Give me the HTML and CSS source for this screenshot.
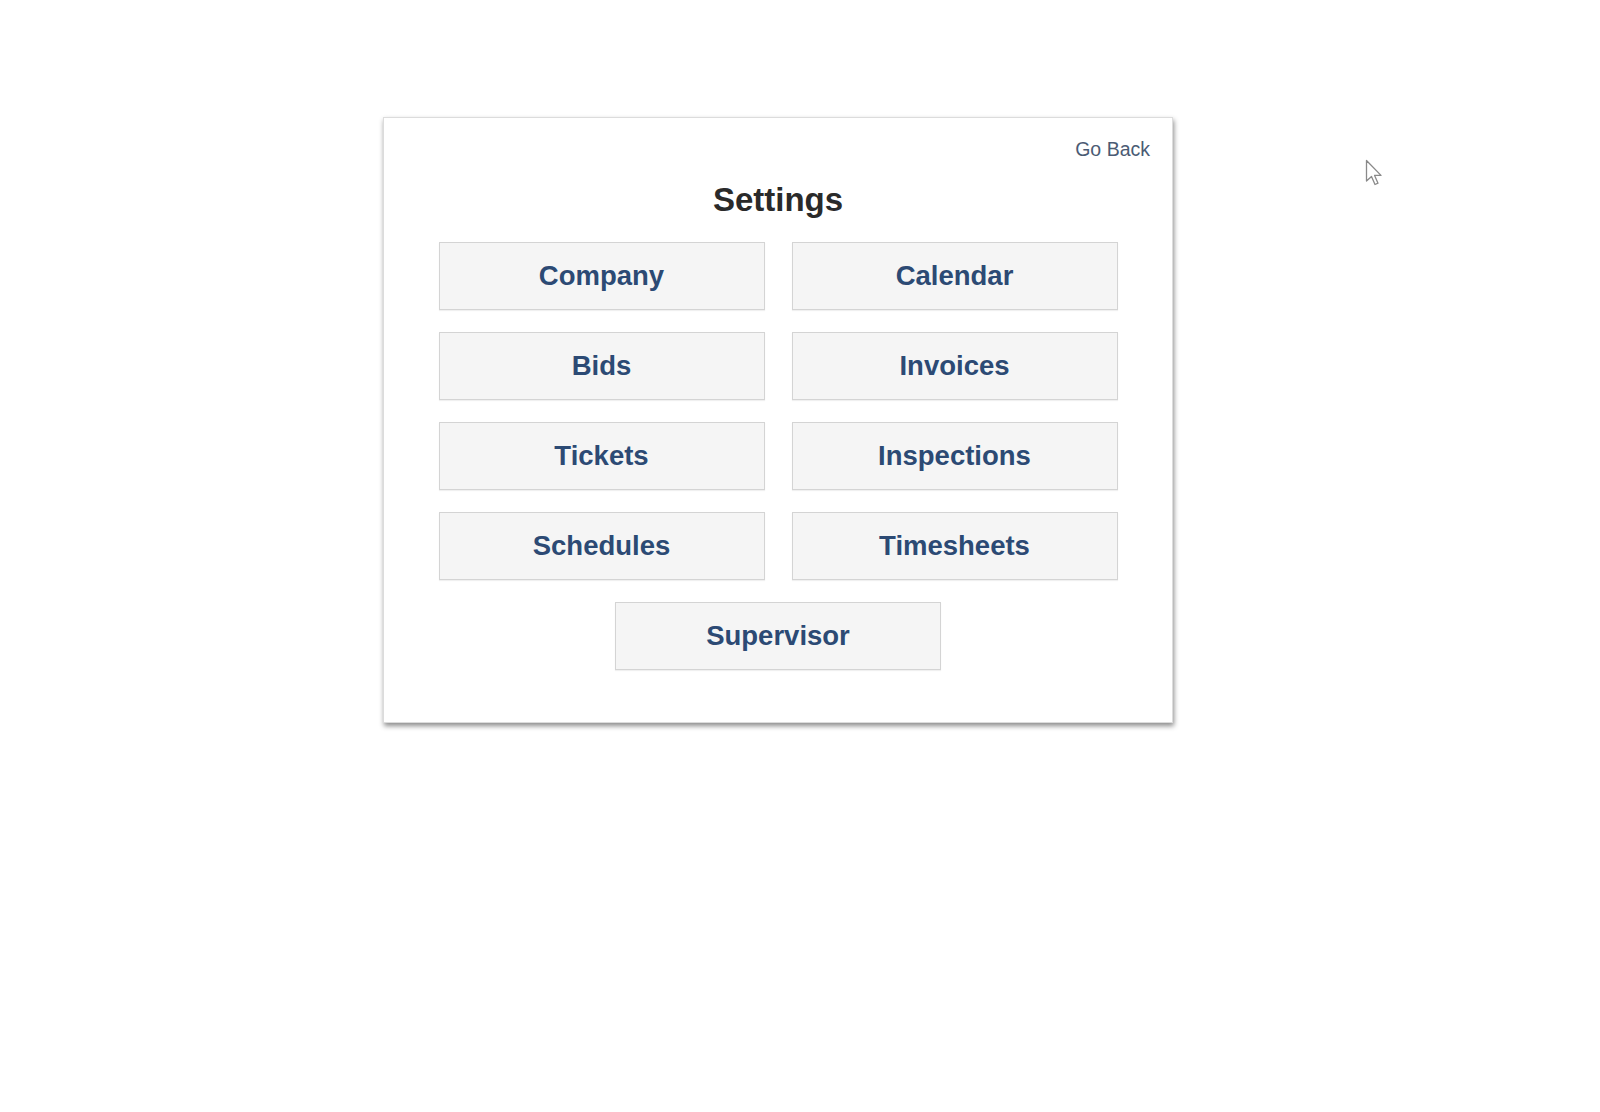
FILE: index.html
```html
<!DOCTYPE html>
<html>
<head>
<meta charset="utf-8">
<link rel="stylesheet" href="styles.css">
</head>
<body>
<div class="page">
  <div class="card">
    <div class="card-top"><a class="go-back">Go Back</a></div>
    <h1 class="title">Settings</h1>
    <div class="grid">
      <div class="btn">Company</div>
      <div class="btn">Calendar</div>
      <div class="btn">Bids</div>
      <div class="btn">Invoices</div>
      <div class="btn">Tickets</div>
      <div class="btn">Inspections</div>
      <div class="btn">Schedules</div>
      <div class="btn">Timesheets</div>
      <div class="btn btn-wide">Supervisor</div>
    </div>
  </div>
  <svg class="cursor" width="20" height="30" viewBox="0 0 20 30">
    <path d="M1.5 1.5 L1.5 22 L6.5 17.5 L10 25.5 L13 24.2 L9.6 16.4 L16 16.4 Z" fill="#fff" stroke="#8a8a8a" stroke-width="1.3" stroke-linejoin="round"/>
  </svg>
</div>
</body>
</html>
```
FILE: styles.css
```css
html, body {
  margin: 0;
  padding: 0;
  background: #ffffff;
  font-family: "Liberation Sans", Arial, Helvetica, sans-serif;
}
.page {
  position: relative;
  width: 1600px;
  height: 1112px;
  padding-top: 117px;
  box-sizing: border-box;
}
.card {
  margin-left: 383px;
  width: 790px;
  height: 606px;
  box-sizing: border-box;
  background: #fff;
  border: 1px solid #dcdcdc;
  box-shadow: 1px 3px 5px rgba(0, 0, 0, 0.45);
  padding: 20px 22px 0 22px;
}
.card-top {
  display: flex;
  justify-content: flex-end;
  height: 22px;
}
.go-back {
  font-size: 19.5px;
  line-height: 22px;
  color: #4b5b74;
  cursor: pointer;
}
.title {
  margin: 20px 0 0 0;
  text-align: center;
  font-size: 33px;
  line-height: 40px;
  font-weight: bold;
  color: #2a2a2a;
}
.grid {
  margin: 22px auto 0 auto;
  display: grid;
  grid-template-columns: 326px 326px;
  grid-auto-rows: 68px;
  column-gap: 27px;
  row-gap: 22px;
  width: 679px;
}
.btn {
  display: flex;
  align-items: center;
  justify-content: center;
  background: #f5f5f5;
  border: 1px solid #d4d4d4;
  box-sizing: border-box;
  font-size: 27.5px;
  font-weight: bold;
  color: #2c4a74;
  box-shadow: 0 1px 1px rgba(0,0,0,0.06);
}
.btn-wide {
  grid-column: 1 / span 2;
  width: 326px;
  justify-self: center;
}
.cursor {
  position: absolute;
  left: 1365px;
  top: 159px;
}
```
